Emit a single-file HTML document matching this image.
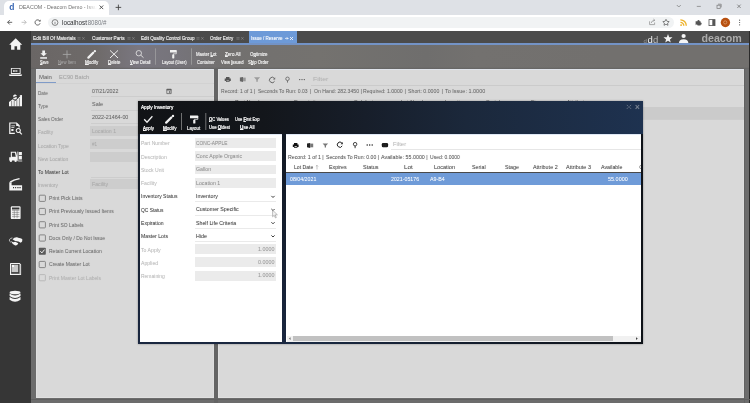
<!DOCTYPE html>
<html><head><meta charset="utf-8">
<style>
*{box-sizing:border-box;margin:0;padding:0}
html,body{width:750px;height:403px;overflow:hidden;background:#fff;font-family:"Liberation Sans",sans-serif}
.a{position:absolute}
.t{position:absolute;white-space:nowrap;line-height:1;text-underline-offset:0.4px;text-decoration-thickness:0.45px;font-family:"Liberation Sans",sans-serif}
#tx{position:absolute;left:0;top:0;width:750px;height:403px;will-change:transform}
svg{position:absolute;overflow:visible;will-change:transform}
</style></head><body>
<!-- chrome tab strip -->
<div class="a" style="left:0;top:0;width:750px;height:15px;background:#dee1e6"></div>
<div class="a" style="left:3.5px;top:1px;width:105px;height:15px;background:#fff;border-radius:5px 5px 0 0"></div>
<div class="a" style="left:0;top:15px;width:750px;height:16px;background:#fff"></div>
<div class="a" style="left:47.5px;top:16.8px;width:626.5px;height:11.4px;background:#f1f3f4;border-radius:6px"></div>
<!-- d logo -->
<svg style="left:0;top:0" width="750" height="31">
 <text x="9.3" y="10.3" font-family="Liberation Sans" font-weight="700" font-size="8.5" fill="#3a68b4">d</text>
 <path d="M99.6 5.5 L103.2 9.1 M103.2 5.5 L99.6 9.1" stroke="#444" stroke-width="0.9"/>
 <path d="M118.4 4.6 V10.2 M115.6 7.4 H121.2" stroke="#444" stroke-width="0.9"/>
 <path d="M676.8 5 L678.8 7 L680.8 5" stroke="#777" stroke-width="0.7" fill="none"/>
 <path d="M696.8 6.4 H700.8" stroke="#777" stroke-width="0.7"/>
 <rect x="717" y="5.2" width="3.2" height="3.2" stroke="#777" stroke-width="0.7" fill="none"/>
 <path d="M718 4.2 H721.2 V7.4" stroke="#777" stroke-width="0.7" fill="none"/>
 <path d="M737.3 4.6 L740.7 8 M740.7 4.6 L737.3 8" stroke="#666" stroke-width="0.7"/>
 <!-- nav -->
 <path d="M12.2 22.3 H7.6 M9.8 20.1 L7.6 22.3 L9.8 24.5" stroke="#555" stroke-width="0.9" fill="none"/>
 <path d="M21.6 22.3 H26.2 M24 20.1 L26.2 22.3 L24 24.5" stroke="#bbb" stroke-width="0.9" fill="none"/>
 <path d="M39.8 21 A2.6 2.6 0 1 0 40.1 23.3" stroke="#555" stroke-width="0.9" fill="none"/>
 <path d="M40.6 19.6 V21.6 H38.6 Z" fill="#555"/>
 <circle cx="55" cy="22.5" r="2.9" stroke="#666" stroke-width="0.8" fill="none"/>
 <path d="M55 21.8 V24" stroke="#666" stroke-width="0.7"/>
 <!-- right icons -->
 <path d="M649.6 21.3 V24.6 H654.6 V22.5 M651.2 23 Q651.8 20.4 654.6 20.2 M653.4 19.1 L654.8 20.2 L653.6 21.4" stroke="#888" stroke-width="0.7" fill="none"/>
 <path d="M666 19.3 L667 21.3 L669.2 21.6 L667.6 23.1 L668 25.3 L666 24.2 L664 25.3 L664.4 23.1 L662.8 21.6 L665 21.3 Z" stroke="#555" stroke-width="0.7" fill="none"/>
 <path d="M680.4 19.9 A5.8 5.8 0 0 1 686.3 25.8 M680.4 22.4 A3.3 3.3 0 0 1 683.8 25.8" stroke="#eeb22a" stroke-width="1.35" fill="none"/>
 <circle cx="681.1" cy="25.1" r="0.95" fill="#eeb22a"/>
 <path d="M695.6 21.2 H697.4 A1.1 1.1 0 0 1 699.6 21.2 H700.6 V22.6 A1.1 1.1 0 0 1 700.6 24.8 V25.6 H697.6 A1 1 0 0 0 695.6 25.6 Z" fill="#555"/>
 <rect x="709" y="19.6" width="6" height="6" stroke="#555" stroke-width="0.8" fill="none"/>
 <rect x="712.3" y="19.6" width="2.7" height="6" fill="#555"/>
 <circle cx="725.4" cy="22.5" r="4.7" fill="#b8500f"/>
 <circle cx="725.2" cy="22.4" r="1.6" stroke="#e8c0a0" stroke-width="0.5" fill="none"/>
 <circle cx="739.6" cy="20.2" r="0.6" fill="#555"/><circle cx="739.6" cy="22.5" r="0.6" fill="#555"/><circle cx="739.6" cy="24.8" r="0.6" fill="#555"/>
</svg>

<!-- APP -->
<div class="a" style="left:0;top:31px;width:31px;height:372px;background:#363636"></div>
<div class="a" style="left:31px;top:31px;width:719px;height:13.3px;background:#4b4b4b"></div>
<div class="a" style="left:248.5px;top:31px;width:48.5px;height:13.3px;background:#6d9ad8"></div>
<div class="a" style="left:31px;top:43px;width:719px;height:2.2px;background:#7393c6"></div>
<div class="a" style="left:31px;top:45.2px;width:719px;height:23.8px;background:linear-gradient(90deg,#6a6665 0%,#6e6a69 9%,#7a7780 15%,#76747b 20%,#72706f 27%,#74726f 40%,#6f6e6d 55%,#73716f 62%,#72706e 80%,#72706e 100%)"></div>
<div class="a" style="left:31px;top:69px;width:719px;height:334px;background:#6c6c6c"></div>
<div class="a" style="left:31px;top:66.5px;width:719px;height:2.5px;background:linear-gradient(180deg,rgba(96,96,96,0),rgba(96,96,96,0.8))"></div>
<div class="a" style="left:213.5px;top:69px;width:4.5px;height:334px;background:#646464"></div>
<div class="a" style="left:744px;top:69px;width:1.2px;height:334px;background:#626262"></div>
<div class="a" style="left:748.8px;top:31px;width:1.2px;height:372px;background:#2a2a2a"></div>
<div class="a" style="left:31px;top:398.5px;width:719px;height:1.2px;background:#606060"></div>
<div class="a" style="left:36px;top:69px;width:177.5px;height:329px;background:#d9d9d9;border-top:1px solid #dfe3ea;border-left:1px solid #e0e0e0;border-bottom:1px solid #e0e0e0;border-right:1px solid #dedede"></div>
<div class="a" style="left:218px;top:69px;width:526px;height:329px;background:#d9d9d9;border-top:1px solid #dfe3ea;border-left:1px solid #e0e0e0;border-bottom:1px solid #e0e0e0;border-right:1px solid #dedede"></div>

<!-- main left tabs underline -->
<div class="a" style="left:36px;top:82px;width:19.6px;height:1.2px;background:#7f9bc8"></div>
<div class="a" style="left:36px;top:83.2px;width:177.5px;height:0.6px;background:#d2d2d2"></div>
<!-- main left fields -->
<div class="a" style="left:90.5px;top:96px;width:123px;height:0.7px;background:#cdcdcd"></div>
<div class="a" style="left:90.5px;top:109.6px;width:123px;height:0.7px;background:#cdcdcd"></div>
<div class="a" style="left:90.5px;top:123px;width:123px;height:0.7px;background:#cdcdcd"></div>
<div class="a" style="left:90.3px;top:126.3px;width:123px;height:9.6px;background:#cdcdcd"></div>
<div class="a" style="left:90.3px;top:139.4px;width:123px;height:9.6px;background:#cdcdcd"></div>
<div class="a" style="left:90.3px;top:152.4px;width:123px;height:9.9px;background:#cdcdcd"></div>
<div class="a" style="left:90.5px;top:176.5px;width:123px;height:0.7px;background:#cdcdcd"></div>
<div class="a" style="left:90.3px;top:179.4px;width:123px;height:9.6px;background:#cdcdcd"></div>
<svg style="left:0;top:0" width="750" height="403">
 <g fill="none" stroke="#777" stroke-width="0.85">
  <rect x="39.2" y="195.2" width="6.2" height="6.2" rx="0.8"/>
  <rect x="39.2" y="208.4" width="6.2" height="6.2" rx="0.8"/>
  <rect x="39.2" y="221.7" width="6.2" height="6.2" rx="0.8"/>
  <rect x="39.2" y="234.9" width="6.2" height="6.2" rx="0.8"/>
  <rect x="39.2" y="261.4" width="6.2" height="6.2" rx="0.8"/>
 </g>
 <rect x="39.2" y="274.6" width="6.2" height="6.2" rx="0.8" fill="none" stroke="#b5b5b5" stroke-width="0.9"/>
 <rect x="38.8" y="247.7" width="7" height="7" rx="0.8" fill="#5a5a5a"/>
 <path d="M40.3 251.2 L41.9 252.9 L44.5 249.6" stroke="#fff" stroke-width="0.9" fill="none"/>
</svg>

<!-- underlying right panel -->
<div class="a" style="left:311px;top:85px;width:433px;height:0.6px;background:#cbcbcb"></div>
<div class="a" style="left:218px;top:107px;width:526px;height:12px;background:#cbcbcb"></div>
<div class="a" style="left:218px;top:119px;width:526px;height:0.8px;background:#cdcdcd"></div>

<span class="t" style="left:235px;top:99.8px;font-size:5.5px;color:#555">Part Number</span>
<span class="t" style="left:294px;top:99.8px;font-size:5.5px;color:#555">Description</span>
<span class="t" style="left:354px;top:99.8px;font-size:5.5px;color:#555">Sub Lot</span>
<span class="t" style="left:401px;top:99.8px;font-size:5.5px;color:#555">Lot Number</span>
<span class="t" style="left:445px;top:99.8px;font-size:5.5px;color:#555">Location</span>
<span class="t" style="left:486px;top:99.8px;font-size:5.5px;color:#555">Serial</span>
<span class="t" style="left:530.6px;top:99.8px;font-size:5.5px;color:#555">Stage</span>
<span class="t" style="left:566.7px;top:99.8px;font-size:5.5px;color:#555">Attribute</span>
<!-- MODAL -->
<div class="a" style="left:137.5px;top:101px;width:505px;height:242.5px;background:linear-gradient(180deg,#121820 0%,#141c2a 40%,#1a2740 100%);box-shadow:0 0 2px rgba(0,0,0,0.35)"></div>
<div class="a" style="left:640.5px;top:134px;width:2px;height:209.5px;background:#0e1218"></div>
<div class="a" style="left:286px;top:341.5px;width:356.5px;height:2px;background:linear-gradient(90deg,#1a2a44,#0e1218)"></div>
<div class="a" style="left:137.5px;top:101px;width:505px;height:32.5px;background:linear-gradient(90deg,#111316 0%,#13161b 25%,#171e2a 45%,#1b283b 65%,#1e3250 100%)"></div>
<div class="a" style="left:139.5px;top:133.5px;width:142px;height:208px;background:#fff;border-top:1px solid #dfe8f5"></div>
<div class="a" style="left:286px;top:133.5px;width:354.5px;height:208px;background:#fff;border-top:1px solid #dfe8f5"></div>
<!-- modal fields -->
<div class="a" style="left:194.5px;top:138px;width:81.5px;height:9.8px;background:#ebebeb"></div>
<div class="a" style="left:194.5px;top:151.3px;width:81.5px;height:10px;background:#ebebeb"></div>
<div class="a" style="left:194.5px;top:164.7px;width:81.5px;height:9.8px;background:#ebebeb"></div>
<div class="a" style="left:194.5px;top:178px;width:81.5px;height:10px;background:#ebebeb"></div>
<div class="a" style="left:194.5px;top:201px;width:81.5px;height:0.8px;background:#eaeaea"></div>
<div class="a" style="left:194.5px;top:214.9px;width:81.5px;height:0.8px;background:#eaeaea"></div>
<div class="a" style="left:194.5px;top:227.9px;width:81.5px;height:0.8px;background:#eaeaea"></div>
<div class="a" style="left:194.5px;top:240.9px;width:81.5px;height:0.8px;background:#eaeaea"></div>
<div class="a" style="left:194.5px;top:244.1px;width:81.5px;height:10.1px;background:#ebebeb"></div>
<div class="a" style="left:194.5px;top:257.3px;width:81.5px;height:10.2px;background:#ebebeb"></div>
<div class="a" style="left:194.5px;top:270.7px;width:81.5px;height:10.3px;background:#ebebeb"></div>
<!-- modal right panel -->
<div class="a" style="left:636px;top:162px;width:4.5px;height:9px;overflow:hidden"><span class="t" style="left:3.2px;top:3.4px;font-size:5.5px;color:#444">C</span></div>

<div class="a" style="left:391px;top:149.3px;width:249.5px;height:0.6px;background:#e6e6e6"></div>
<div class="a" style="left:286px;top:172px;width:354.5px;height:1px;background:#4a4a4a"></div>
<div class="a" style="left:286px;top:173.2px;width:354.5px;height:11.5px;background:#6f9bd8"></div>
<div class="a" style="left:287px;top:335.5px;width:353.5px;height:6px;background:#f1f1f1"></div>
<div class="a" style="left:293px;top:336px;width:320px;height:5px;background:#c1c1c1"></div>
<svg style="left:0;top:0" width="750" height="403">
 <path d="M290.6 337.3 L288.8 338.6 L290.6 339.9 Z" fill="#777"/>
 <path d="M636 337.3 L637.8 338.6 L636 339.9 Z" fill="#444"/>
 <!-- chevrons -->
 <g stroke="#333" stroke-width="0.95" fill="none">
  <path d="M271.4 195.9 L273 197.5 L274.6 195.9"/>
  <path d="M271.4 209 L273 210.6 L274.6 209"/>
  <path d="M271.4 222.2 L273 223.8 L274.6 222.2"/>
  <path d="M271.4 235.4 L273 237 L274.6 235.4"/>
 </g>
 <!-- cursor -->
 <path d="M272.6 210.2 L272.6 216.8 L274.2 215.3 L275.4 217.9 L276.3 217.5 L275.2 214.9 L277.4 214.8 Z" fill="#f4f4f4" stroke="#8a8a8a" stroke-width="0.55"/>
 <!-- sort arrow -->
 <path d="M317 169.5 V165.3 M315.9 166.4 L317 165.3 L318.1 166.4" stroke="#888" stroke-width="0.5" fill="none"/>
</svg>

<!-- ICONS -->
<svg style="left:0;top:0" width="750" height="403">
 <path d="M166.8 89.2 H171.2 V93.6 H166.8 Z" stroke="#555" stroke-width="0.7" fill="none"/>
 <rect x="166.8" y="89.2" width="4.4" height="1.2" fill="#555"/>
 <rect x="168.9" y="91.3" width="1.4" height="1.4" fill="#555"/>
</svg>
<svg style="left:0;top:0" width="750" height="403">
 <!-- sidebar -->
 <g fill="#f4f4f4">
  <path d="M15.7 38.3 L22.2 44.7 H20.3 V49.8 H17.1 V46.2 H14.5 V49.8 H11.1 V44.7 H9.2 Z"/>
  <path d="M10.9 67.9 H20.6 V74 H10.9 Z M11.8 68.8 V73.1 H19.7 V68.8 Z M8.8 74.4 H22.2 L21.5 76.1 H9.5 Z"/>
  <path d="M15.5 70 L18.2 71 L15.5 72 Z M13 70.2 H14.8 V71.8 H13 Z" />
  <path d="M9 106.3 V102 L12.8 99.2 L15.3 101 L20.2 96.2 L19.6 95.3 L22 95.1 V106.3 Z"/><path d="M11.6 101 V106.5 M14.2 100.5 V106.5 M16.8 100 V106.5 M19.4 98 V106.5" stroke="#363636" stroke-width="0.55"/>
  <path d="M14.5 94.3 h1 v0.8 h1.1 v1 h-2 v0.6 h1.7 q0.4 0 0.4 0.5 v1.2 q0 0.5 -0.4 0.5 h-0.8 v0.8 h-1 v-0.8 h-1.1 v-1 h2 v-0.6 h-1.7 q-0.4 0 -0.4 -0.5 v-1.2 q0 -0.5 0.4 -0.5 h0.8 Z"/>
  <path d="M9.2 122.4 H16.8 L19.7 125.3 V127.6 A3.4 3.4 0 0 0 18.5 127.6 V125.9 H16.2 V123.6 H10.4 V132.8 H15 L14.7 134 H9.2 Z"/>
  <path d="M11.3 125.5 H15 V126.3 H11.3 Z M11.3 127.3 H14.3 V128.1 H11.3 Z M11.3 129.1 H13.5 V131 H11.3 Z"/>
  <path d="M18.3 127.9 A2.6 2.6 0 1 1 18.29 127.9 Z M18.3 129 A1.5 1.5 0 1 0 18.31 129 Z" fill-rule="evenodd"/>
  <path d="M19.9 131.6 L22.3 134 L21.4 134.8 L19.1 132.5 Z"/>
  <path d="M10.8 151.8 H16 L17.3 156.8 V160.6 H9.2 V157.3 H10.8 Z M11.9 152.8 V156.8 H15.8 L14.9 152.8 Z" fill-rule="evenodd"/>
  <circle cx="10.9" cy="160.8" r="1.2"/><circle cx="15.6" cy="160.8" r="1.2"/>
  <rect x="17.4" y="151.6" width="0.9" height="9.6"/>
  <path d="M18.3 160.6 H22.2 V161.4 H18.3 Z"/>
  <path d="M18.8 152 H21.9 V155.3 H18.8 Z M18.8 156 H21.9 V159.6 H18.8 Z"/>
  <path d="M9.6 181.4 Q13 179.3 19.3 177.9 L19.8 179.2 Q14.5 180.2 11 182.5 Z"/>
  <path d="M9.3 182.2 H11.6 V185.3 H22.1 V190.5 H9.3 Z M13 187.1 H14.1 V188.2 H13 Z M15.1 187.1 H16.2 V188.2 H15.1 Z M17.3 187.1 H18.6 V188.2 H17.3 Z M19.4 187.1 H20.7 V188.2 H19.4 Z" fill-rule="evenodd"/>
  <rect x="10.8" y="206.3" width="9.8" height="12.8" rx="1.2"/><rect x="12" y="207.5" width="7.4" height="2" fill="#363636"/><path d="M12 210.6 H19.4 M12 212.6 H19.4 M12 214.6 H19.4 M12 216.6 H19.4 M14.3 210.3 V218.2 M17.1 210.3 V218.2" stroke="#5a5a5a" stroke-width="0.45"/>
  <path d="M12.6 239.3 Q14.2 237 17 237.2 L19 238 Q21.8 237.9 22.4 239.6 Q22.6 241.8 20.8 242.8 L18.4 241.4 L15.4 241.1 Q13.8 240.6 12.6 239.3 Z"/>
  <path d="M10.8 241 L13.2 242.2 L15.3 241.7 L18.3 243.2 Q17.4 245.6 15.2 245.4 Q12.6 244.8 10.8 241 Z"/>
  <path d="M12.4 237.9 Q10 238 9.3 240 Q9.4 241.6 10.8 242.3" stroke="#d8d8d8" stroke-width="0.8" fill="none"/>
  <path d="M10.9 262.9 H19.6 L21.1 264.4 V274.9 H10 V263.8 Q10 262.9 10.9 262.9 Z M11.1 264 V273.8 H20 V264.9 L19.2 264 Z" fill-rule="evenodd"/>
  <rect x="19.4" y="264.6" width="1.3" height="9.8" fill="#bdbdbd"/>
  <rect x="11.6" y="264.7" width="6.6" height="7.6" fill="#c8c8c8"/>
  <rect x="12.1" y="265.1" width="1.8" height="1.8" fill="#fff"/>
  <path d="M11.6 272.6 H18.4" stroke="#3a3a3a" stroke-width="0.6"/>
  <ellipse cx="15.05" cy="292.5" rx="5.45" ry="1.8"/>
  <path d="M9.6 293.6 Q15 297.4 20.5 293.6 V296 Q15 299.8 9.6 296 Z"/>
  <path d="M9.6 297 Q15 300.8 20.5 297 V299.7 Q15 304 9.6 299.7 Z"/>
 </g>
 <!-- main toolbar -->
 <g fill="#f2f2f2">
  <path d="M42.3 50.4 H45 V53.2 H46.9 L43.65 56.3 L40.4 53.2 H42.3 Z"/>
  <rect x="40.2" y="57.2" width="6.8" height="1.5"/>
 </g>
 <path d="M67 50.4 V58.4 M62.8 54.4 H71.2" stroke="#a5a5a5" stroke-width="0.9"/>
 <path d="M88.4 57.6 L93.2 52.8" stroke="#f0f0f0" stroke-width="2.3" stroke-linecap="round"/><circle cx="94.9" cy="51.2" r="1.15" fill="#f0f0f0"/>
 <path d="M110 50.4 L118 58 M118 50.4 L110 58" stroke="#f2f2f2" stroke-width="1"/>
 <circle cx="138.8" cy="53.2" r="2.7" stroke="#dcdcdc" stroke-width="0.9" fill="none"/>
 <path d="M140.7 55.1 L143.5 57.7" stroke="#dcdcdc" stroke-width="1"/>
 <path d="M155.5 48.3 V64.7 M191.5 48.3 V64.7" stroke="#a5a5a5" stroke-width="0.7"/>
 <g fill="#f2f2f2">
  <path d="M170 50 H176 Q176.8 50 176.8 50.8 V52.6 H170 Z"/><path d="M176.3 52.4 V53.8 H173.3 V55" stroke="#f2f2f2" stroke-width="0.7" fill="none"/><rect x="172.2" y="54.4" width="2.1" height="4" rx="0.6"/>
 </g>
 <!-- tab icons -->
 <g stroke="#9a9a9a" stroke-width="0.5">
  <path d="M77.4 37.7 H80.6 M77.4 39.1 H80.6 M82.2 37.1 L84.6 39.7 M84.6 37.1 L82.2 39.7"/>
  <path d="M127.4 37.7 H130.6 M127.4 39.1 H130.6 M132.2 37.1 L134.6 39.7 M134.6 37.1 L132.2 39.7"/>
  <path d="M196.4 37.7 H199.6 M196.4 39.1 H199.6 M201.2 37.1 L203.6 39.7 M203.6 37.1 L201.2 39.7"/>
  <path d="M236.4 37.7 H239.6 M236.4 39.1 H239.6 M241.2 37.1 L243.6 39.7 M243.6 37.1 L241.2 39.7"/>
 </g>
 <path d="M285 38.45 L286.6 37.3 V39.6 Z M288.8 38.45 L287.2 37.3 V39.6 Z" fill="#fff"/>
 <path d="M290 37 L293 40 M293 37 L290 40" stroke="#fff" stroke-width="0.8"/>
 <!-- header right -->
 <text x="643.6" y="42.6" font-family="Liberation Sans" font-size="6" fill="#9a9a9a">d</text>
 <text x="647.6" y="42.6" font-family="Liberation Sans" font-size="9.5" fill="#f2f2f2">d</text>
 <text x="653" y="42.6" font-family="Liberation Sans" font-size="9.5" fill="#b9b9b9">d</text>
 <path d="M668 34 L669.2 37.2 L672.5 37.3 L669.9 39.4 L670.8 42.6 L668 40.8 L665.2 42.6 L666.1 39.4 L663.5 37.3 L666.8 37.2 Z" fill="#f4f4f4"/>
 <circle cx="683.6" cy="36" r="2.1" fill="#f4f4f4"/>
 <path d="M678.9 43 Q679 39.4 683.6 39.2 Q688.2 39.4 688.4 43 Z" fill="#f4f4f4"/>
 <text x="701.5" y="41.6" font-family="Liberation Sans" font-weight="700" font-size="11.5" fill="#ababab" textLength="40.3" lengthAdjust="spacingAndGlyphs">deacom</text>
 <!-- underlying right panel toolbar -->
 <g fill="#555">
  <path d="M226 76.9 H229.5 V78.4 H230.8 V81 H229.5 V82 H226 V81 H224.7 V78.4 H226 Z M226.6 80.4 V81.3 H228.9 V80.4 Z" fill-rule="evenodd"/>
 </g>
 <path d="M239.9 77.6 L243 76.9 V82 L239.9 81.3 Z" fill="#666"/>
 <rect x="243" y="77.6" width="2.7" height="3.7" fill="#999"/>
 <path d="M254 77.3 H260.1 L257.8 79.8 V81.7 L256.3 81.7 V79.8 Z" fill="#9c9c9c"/>
 <path d="M274.3 78.3 A2.7 2.7 0 1 0 274.6 81.2" stroke="#666" stroke-width="1" fill="none"/>
 <path d="M275.2 77.3 V79.5 H273 Z" fill="#666"/>
 <circle cx="287.5" cy="78.8" r="1.75" stroke="#666" stroke-width="0.85" fill="none"/><path d="M287.5 80.6 V82.6" stroke="#666" stroke-width="0.9"/>
 <g fill="#555"><circle cx="299.7" cy="79.6" r="0.7"/><circle cx="302" cy="79.6" r="0.7"/><circle cx="304.3" cy="79.6" r="0.7"/></g>
 <!-- modal toolbar -->
 <path d="M144.2 119.3 L147 122.2 L152.4 116.3" stroke="#f2f2f2" stroke-width="1.3" fill="none"/>
 <path d="M166.2 122.6 L171.3 117.5" stroke="#f2f2f2" stroke-width="2.3" stroke-linecap="round"/><circle cx="173" cy="115.9" r="1.2" fill="#f2f2f2"/>
 <path d="M181.5 113 V130 M205.8 113 V130" stroke="#9a9a9a" stroke-width="0.7"/>
 <g fill="#f2f2f2"><path d="M190 115.5 H197.5 Q198.3 115.5 198.3 116.3 V118.2 H190 Z"/><path d="M197.8 118 V119.4 H194.4 V120.5" stroke="#f2f2f2" stroke-width="0.7" fill="none"/><rect x="193.2" y="119.8" width="2.2" height="3.8" rx="0.6"/></g>
 <!-- modal window controls -->
 <g stroke="#76808f" stroke-width="0.8" fill="none">
  <path d="M626.8 104.9 L628.4 106.5 M631.1 104.9 L629.5 106.5 M626.8 108.9 L628.4 107.3 M631.1 108.9 L629.5 107.3"/>
  <path d="M635.6 105 L639.1 108.8 M639.1 105 L635.6 108.8" stroke-width="1.1"/>
 </g>
 <!-- modal right toolbar -->
 <path d="M294 143.1 H297.4 V144.5 H298.6 V147 H297.4 V147.8 H294 V147 H292.8 V144.5 H294 Z M294.6 146.3 V147.1 H296.8 V146.3 Z" fill="#111" fill-rule="evenodd"/>
 <path d="M307 143.6 L310.2 142.9 V148 L307 147.3 Z" fill="#222"/>
 <rect x="310.2" y="143.6" width="3" height="3.7" fill="#777"/>
 <path d="M322.6 143.5 H328.1 L326 145.8 V147.5 L324.7 147.5 V145.8 Z" fill="#777"/>
 <path d="M341.9 143 A2.6 2.6 0 1 0 342.2 145.9" stroke="#222" stroke-width="1" fill="none"/>
 <path d="M342.8 142 V144.2 H340.6 Z" fill="#222"/>
 <circle cx="355.1" cy="144.2" r="1.75" stroke="#222" stroke-width="0.85" fill="none"/><path d="M355.1 146 V148.2" stroke="#222" stroke-width="0.9"/>
 <g fill="#222"><circle cx="367.2" cy="145" r="0.75"/><circle cx="369.7" cy="145" r="0.75"/><circle cx="372.2" cy="145" r="0.75"/></g>
 <rect x="381.8" y="142.9" width="6.3" height="4.3" rx="1.3" fill="#151515"/><path d="M383.9 142.9 V147.2 M385.9 142.9 V147.2" stroke="#555" stroke-width="0.35"/>
</svg>
<div id="tx"><span class="t" style="left:18.65px;top:4.70px;font-size:5.8px;color:#707070;font-weight:400;transform:scaleX(0.9152);transform-origin:0 0;text-shadow:0 0 0.9px rgba(112,112,112,0.25);text-shadow:none;-webkit-mask-image:linear-gradient(90deg,#000 85%,transparent 100%)">DEACOM - Deacom Demo - Issu</span>
<span class="t" style="left:61.61px;top:19.58px;font-size:6.5px;color:#303134;font-weight:400;transform:scaleX(0.9728);transform-origin:0 0;text-shadow:0 0 0.9px rgba(48,49,52,0.25);text-shadow:none">localhost</span>
<span class="t" style="left:86.21px;top:19.58px;font-size:6.5px;color:#7a7d82;font-weight:400;transform:scaleX(0.9422);transform-origin:0 0;text-shadow:0 0 0.9px rgba(122,125,130,0.25);text-shadow:none">:8080/#</span>
<span class="t" style="left:32.67px;top:35.91px;font-size:5.5px;color:#f2f2f2;font-weight:400;transform:scaleX(0.8597);transform-origin:0 0;text-shadow:0 0 0.9px rgba(242,242,242,0.25);-webkit-text-stroke:0.12px #f2f2f2">Edit Bill Of Materials</span>
<span class="t" style="left:91.67px;top:35.91px;font-size:5.5px;color:#f2f2f2;font-weight:400;transform:scaleX(0.8520);transform-origin:0 0;text-shadow:0 0 0.9px rgba(242,242,242,0.25);-webkit-text-stroke:0.12px #f2f2f2">Customer Parts</span>
<span class="t" style="left:140.67px;top:35.91px;font-size:5.5px;color:#f2f2f2;font-weight:400;transform:scaleX(0.8341);transform-origin:0 0;text-shadow:0 0 0.9px rgba(242,242,242,0.25);-webkit-text-stroke:0.12px #f2f2f2">Edit Quality Control Group</span>
<span class="t" style="left:210.47px;top:35.91px;font-size:5.5px;color:#f2f2f2;font-weight:400;transform:scaleX(0.8208);transform-origin:0 0;text-shadow:0 0 0.9px rgba(242,242,242,0.25);-webkit-text-stroke:0.12px #f2f2f2">Order Entry</span>
<span class="t" style="left:250.87px;top:35.91px;font-size:5.5px;color:#ffffff;font-weight:400;transform:scaleX(0.8227);transform-origin:0 0;text-shadow:0 0 0.9px rgba(255,255,255,0.25);-webkit-text-stroke:0.08px #fff">Issue / Reserve</span>
<span class="t" style="left:39.72px;top:61.11px;font-size:4.7px;color:#f0f0f0;font-weight:400;transform:scaleX(0.7890);transform-origin:0 0;text-shadow:0 0 0.9px rgba(240,240,240,0.25);-webkit-text-stroke:0.12px #f0f0f0"><u>S</u>ave</span>
<span class="t" style="left:57.72px;top:61.11px;font-size:4.7px;color:#a8a8a8;font-weight:400;transform:scaleX(0.9040);transform-origin:0 0;text-shadow:0 0 0.9px rgba(168,168,168,0.25);"><u>N</u>ew Item</span>
<span class="t" style="left:84.72px;top:61.11px;font-size:4.7px;color:#f0f0f0;font-weight:400;transform:scaleX(0.9661);transform-origin:0 0;text-shadow:0 0 0.9px rgba(240,240,240,0.25);-webkit-text-stroke:0.12px #f0f0f0"><u>M</u>odify</span>
<span class="t" style="left:107.72px;top:61.11px;font-size:4.7px;color:#f0f0f0;font-weight:400;transform:scaleX(0.9232);transform-origin:0 0;text-shadow:0 0 0.9px rgba(240,240,240,0.25);-webkit-text-stroke:0.12px #f0f0f0"><u>D</u>elete</span>
<span class="t" style="left:129.52px;top:61.11px;font-size:4.7px;color:#f0f0f0;font-weight:400;transform:scaleX(0.8768);transform-origin:0 0;text-shadow:0 0 0.9px rgba(240,240,240,0.25);-webkit-text-stroke:0.12px #f0f0f0"><u>V</u>iew Detail</span>
<span class="t" style="left:161.72px;top:60.91px;font-size:4.7px;color:#f0f0f0;font-weight:400;transform:scaleX(0.8620);transform-origin:0 0;text-shadow:0 0 0.9px rgba(240,240,240,0.25);-webkit-text-stroke:0.12px #f0f0f0">Layout (User)</span>
<span class="t" style="left:195.72px;top:52.61px;font-size:4.7px;color:#f0f0f0;font-weight:400;transform:scaleX(0.9256);transform-origin:0 0;text-shadow:0 0 0.9px rgba(240,240,240,0.25);-webkit-text-stroke:0.12px #f0f0f0">Master <u>L</u>ot</span>
<span class="t" style="left:196.72px;top:60.91px;font-size:4.7px;color:#f0f0f0;font-weight:400;transform:scaleX(0.8601);transform-origin:0 0;text-shadow:0 0 0.9px rgba(240,240,240,0.25);-webkit-text-stroke:0.12px #f0f0f0">Container</span>
<span class="t" style="left:224.72px;top:52.61px;font-size:4.7px;color:#f0f0f0;font-weight:400;transform:scaleX(0.9777);transform-origin:0 0;text-shadow:0 0 0.9px rgba(240,240,240,0.25);-webkit-text-stroke:0.12px #f0f0f0"><u>Z</u>ero All</span>
<span class="t" style="left:220.72px;top:60.91px;font-size:4.7px;color:#f0f0f0;font-weight:400;transform:scaleX(0.8923);transform-origin:0 0;text-shadow:0 0 0.9px rgba(240,240,240,0.25);-webkit-text-stroke:0.12px #f0f0f0">View <u>I</u>ssued</span>
<span class="t" style="left:249.72px;top:52.61px;font-size:4.7px;color:#f0f0f0;font-weight:400;transform:scaleX(0.9470);transform-origin:0 0;text-shadow:0 0 0.9px rgba(240,240,240,0.25);-webkit-text-stroke:0.12px #f0f0f0">O<u>p</u>timize</span>
<span class="t" style="left:247.72px;top:60.91px;font-size:4.7px;color:#f0f0f0;font-weight:400;transform:scaleX(0.9040);transform-origin:0 0;text-shadow:0 0 0.9px rgba(240,240,240,0.25);-webkit-text-stroke:0.12px #f0f0f0">S<u>h</u>ip Order</span>
<span class="t" style="left:39.43px;top:73.91px;font-size:6.2px;color:#666;font-weight:400;transform:scaleX(0.9623);transform-origin:0 0;text-shadow:0 0 0.9px rgba(102,102,102,0.25);">Main</span>
<span class="t" style="left:58.83px;top:73.91px;font-size:6.2px;color:#a3a3a3;font-weight:400;transform:scaleX(0.9168);transform-origin:0 0;text-shadow:0 0 0.9px rgba(163,163,163,0.25);">EC90 Batch</span>
<span class="t" style="left:37.76px;top:90.50px;font-size:5.6px;color:#6c6c6c;font-weight:400;transform:scaleX(0.8336);transform-origin:0 0;text-shadow:0 0 0.9px rgba(108,108,108,0.25);">Date</span>
<span class="t" style="left:37.76px;top:103.50px;font-size:5.6px;color:#6c6c6c;font-weight:400;transform:scaleX(0.8283);transform-origin:0 0;text-shadow:0 0 0.9px rgba(108,108,108,0.25);">Type</span>
<span class="t" style="left:37.76px;top:116.90px;font-size:5.6px;color:#6c6c6c;font-weight:400;transform:scaleX(0.8428);transform-origin:0 0;text-shadow:0 0 0.9px rgba(108,108,108,0.25);">Sales Order</span>
<span class="t" style="left:37.76px;top:130.20px;font-size:5.6px;color:#a9a9a9;font-weight:400;transform:scaleX(0.8665);transform-origin:0 0;text-shadow:0 0 0.9px rgba(169,169,169,0.25);">Facility</span>
<span class="t" style="left:37.76px;top:143.60px;font-size:5.6px;color:#a9a9a9;font-weight:400;transform:scaleX(0.8837);transform-origin:0 0;text-shadow:0 0 0.9px rgba(169,169,169,0.25);">Location Type</span>
<span class="t" style="left:37.76px;top:156.90px;font-size:5.6px;color:#a9a9a9;font-weight:400;transform:scaleX(0.8967);transform-origin:0 0;text-shadow:0 0 0.9px rgba(169,169,169,0.25);">New Location</span>
<span class="t" style="left:37.76px;top:170.20px;font-size:5.6px;color:#444;font-weight:400;transform:scaleX(0.9061);transform-origin:0 0;text-shadow:0 0 0.9px rgba(68,68,68,0.25);">To Master Lot</span>
<span class="t" style="left:37.76px;top:183.40px;font-size:5.6px;color:#a9a9a9;font-weight:400;transform:scaleX(0.8638);transform-origin:0 0;text-shadow:0 0 0.9px rgba(169,169,169,0.25);">Inventory</span>
<span class="t" style="left:91.95px;top:88.80px;font-size:5.8px;color:#666;font-weight:400;transform:scaleX(0.9110);transform-origin:0 0;text-shadow:0 0 0.9px rgba(102,102,102,0.25);">07/21/2022</span>
<span class="t" style="left:91.95px;top:102.20px;font-size:5.8px;color:#666;font-weight:400;transform:scaleX(0.9438);transform-origin:0 0;text-shadow:0 0 0.9px rgba(102,102,102,0.25);">Sale</span>
<span class="t" style="left:91.95px;top:115.20px;font-size:5.8px;color:#666;font-weight:400;transform:scaleX(0.9241);transform-origin:0 0;text-shadow:0 0 0.9px rgba(102,102,102,0.25);">2022-21464-00</span>
<span class="t" style="left:92.15px;top:128.50px;font-size:5.8px;color:#a9a9a9;font-weight:400;transform:scaleX(0.9014);transform-origin:0 0;text-shadow:0 0 0.9px rgba(169,169,169,0.25);">Location 1</span>
<span class="t" style="left:92.15px;top:141.70px;font-size:5.8px;color:#a9a9a9;font-weight:400;transform:scaleX(0.7816);transform-origin:0 0;text-shadow:0 0 0.9px rgba(169,169,169,0.25);">#1</span>
<span class="t" style="left:92.15px;top:182.00px;font-size:5.8px;color:#a9a9a9;font-weight:400;transform:scaleX(0.8933);transform-origin:0 0;text-shadow:0 0 0.9px rgba(169,169,169,0.25);">Facility</span>
<span class="t" style="left:48.56px;top:195.90px;font-size:5.6px;color:#6c6c6c;font-weight:400;transform:scaleX(0.9135);transform-origin:0 0;text-shadow:0 0 0.9px rgba(108,108,108,0.25);">Print Pick Lists</span>
<span class="t" style="left:48.56px;top:209.10px;font-size:5.6px;color:#6c6c6c;font-weight:400;transform:scaleX(0.8971);transform-origin:0 0;text-shadow:0 0 0.9px rgba(108,108,108,0.25);">Print Previously Issued Items</span>
<span class="t" style="left:48.56px;top:222.50px;font-size:5.6px;color:#6c6c6c;font-weight:400;transform:scaleX(0.8802);transform-origin:0 0;text-shadow:0 0 0.9px rgba(108,108,108,0.25);">Print SO Labels</span>
<span class="t" style="left:48.56px;top:235.80px;font-size:5.6px;color:#6c6c6c;font-weight:400;transform:scaleX(0.8934);transform-origin:0 0;text-shadow:0 0 0.9px rgba(108,108,108,0.25);">Docs Only / Do Not Issue</span>
<span class="t" style="left:48.56px;top:248.90px;font-size:5.6px;color:#6c6c6c;font-weight:400;transform:scaleX(0.8918);transform-origin:0 0;text-shadow:0 0 0.9px rgba(108,108,108,0.25);">Retain Current Location</span>
<span class="t" style="left:48.56px;top:262.30px;font-size:5.6px;color:#6c6c6c;font-weight:400;transform:scaleX(0.9091);transform-origin:0 0;text-shadow:0 0 0.9px rgba(108,108,108,0.25);">Create Master Lot</span>
<span class="t" style="left:48.56px;top:275.50px;font-size:5.6px;color:#b0b0b0;font-weight:400;transform:scaleX(0.9040);transform-origin:0 0;text-shadow:0 0 0.9px rgba(176,176,176,0.25);">Print Master Lot Labels</span>
<span class="t" style="left:313.15px;top:77.30px;font-size:5.8px;color:#b3b3b3;font-weight:400;transform:scaleX(1.1890);transform-origin:0 0;text-shadow:0 0 0.9px rgba(179,179,179,0.25);">Filter</span>
<span class="t" style="left:220.67px;top:88.91px;font-size:5.5px;color:#6a6a6a;font-weight:400;transform:scaleX(0.9148);transform-origin:0 0;text-shadow:0 0 0.9px rgba(106,106,106,0.25);">Record: 1 of 1</span>
<span class="t" style="left:253.87px;top:88.91px;font-size:5.5px;color:#6a6a6a;font-weight:400;transform:scaleX(1.0000);transform-origin:0 0;text-shadow:0 0 0.9px rgba(106,106,106,0.25);">|</span>
<span class="t" style="left:258.47px;top:88.91px;font-size:5.5px;color:#6a6a6a;font-weight:400;transform:scaleX(0.9181);transform-origin:0 0;text-shadow:0 0 0.9px rgba(106,106,106,0.25);">Seconds To Run: 0.03</span>
<span class="t" style="left:310.07px;top:88.91px;font-size:5.5px;color:#6a6a6a;font-weight:400;transform:scaleX(1.0000);transform-origin:0 0;text-shadow:0 0 0.9px rgba(106,106,106,0.25);">|</span>
<span class="t" style="left:313.57px;top:88.91px;font-size:5.5px;color:#6a6a6a;font-weight:400;transform:scaleX(0.9376);transform-origin:0 0;text-shadow:0 0 0.9px rgba(106,106,106,0.25);">On Hand: 282.3450</span>
<span class="t" style="left:360.47px;top:88.91px;font-size:5.5px;color:#6a6a6a;font-weight:400;transform:scaleX(1.0000);transform-origin:0 0;text-shadow:0 0 0.9px rgba(106,106,106,0.25);">|</span>
<span class="t" style="left:363.47px;top:88.91px;font-size:5.5px;color:#6a6a6a;font-weight:400;transform:scaleX(0.9412);transform-origin:0 0;text-shadow:0 0 0.9px rgba(106,106,106,0.25);">Required: 1.0000</span>
<span class="t" style="left:404.47px;top:88.91px;font-size:5.5px;color:#6a6a6a;font-weight:400;transform:scaleX(1.0000);transform-origin:0 0;text-shadow:0 0 0.9px rgba(106,106,106,0.25);">|</span>
<span class="t" style="left:408.37px;top:88.91px;font-size:5.5px;color:#6a6a6a;font-weight:400;transform:scaleX(0.9484);transform-origin:0 0;text-shadow:0 0 0.9px rgba(106,106,106,0.25);">Short: 0.0000</span>
<span class="t" style="left:441.47px;top:88.91px;font-size:5.5px;color:#6a6a6a;font-weight:400;transform:scaleX(1.0000);transform-origin:0 0;text-shadow:0 0 0.9px rgba(106,106,106,0.25);">|</span>
<span class="t" style="left:445.07px;top:88.91px;font-size:5.5px;color:#6a6a6a;font-weight:400;transform:scaleX(0.9971);transform-origin:0 0;text-shadow:0 0 0.9px rgba(106,106,106,0.25);">To Issue: 1.0000</span>
<span class="t" style="left:140.67px;top:104.71px;font-size:5.5px;color:#ffffff;font-weight:400;transform:scaleX(0.8507);transform-origin:0 0;text-shadow:0 0 0.9px rgba(255,255,255,0.25);-webkit-text-stroke:0.2px #fff">Apply Inventory</span>
<span class="t" style="left:142.81px;top:126.61px;font-size:4.8px;color:#f4f4f4;font-weight:400;transform:scaleX(0.9004);transform-origin:0 0;text-shadow:0 0 0.9px rgba(244,244,244,0.25);-webkit-text-stroke:0.18px #f4f4f4"><u>A</u>pply</span>
<span class="t" style="left:162.91px;top:126.61px;font-size:4.8px;color:#f4f4f4;font-weight:400;transform:scaleX(0.9510);transform-origin:0 0;text-shadow:0 0 0.9px rgba(244,244,244,0.25);-webkit-text-stroke:0.18px #f4f4f4"><u>M</u>odify</span>
<span class="t" style="left:187.21px;top:126.61px;font-size:4.8px;color:#f4f4f4;font-weight:400;transform:scaleX(0.9110);transform-origin:0 0;text-shadow:0 0 0.9px rgba(244,244,244,0.25);-webkit-text-stroke:0.18px #f4f4f4">Layout</span>
<span class="t" style="left:209.41px;top:117.61px;font-size:4.8px;color:#f4f4f4;font-weight:400;transform:scaleX(0.8667);transform-origin:0 0;text-shadow:0 0 0.9px rgba(244,244,244,0.25);-webkit-text-stroke:0.18px #f4f4f4"><u>Q</u>C Values</span>
<span class="t" style="left:234.71px;top:117.61px;font-size:4.8px;color:#f4f4f4;font-weight:400;transform:scaleX(0.8500);transform-origin:0 0;text-shadow:0 0 0.9px rgba(244,244,244,0.25);-webkit-text-stroke:0.18px #f4f4f4">Use <u>F</u>irst Exp</span>
<span class="t" style="left:209.21px;top:126.31px;font-size:4.8px;color:#f4f4f4;font-weight:400;transform:scaleX(0.8846);transform-origin:0 0;text-shadow:0 0 0.9px rgba(244,244,244,0.25);-webkit-text-stroke:0.18px #f4f4f4">Use <u>O</u>ldest</span>
<span class="t" style="left:239.71px;top:126.31px;font-size:4.8px;color:#f4f4f4;font-weight:400;transform:scaleX(0.9748);transform-origin:0 0;text-shadow:0 0 0.9px rgba(244,244,244,0.25);-webkit-text-stroke:0.18px #f4f4f4"><u>U</u>se All</span>
<span class="t" style="left:140.86px;top:141.30px;font-size:5.6px;color:#b8b8b8;font-weight:400;transform:scaleX(0.9019);transform-origin:0 0;text-shadow:0 0 0.9px rgba(184,184,184,0.25);">Part Number</span>
<span class="t" style="left:140.86px;top:154.70px;font-size:5.6px;color:#b8b8b8;font-weight:400;transform:scaleX(0.9227);transform-origin:0 0;text-shadow:0 0 0.9px rgba(184,184,184,0.25);">Description</span>
<span class="t" style="left:140.96px;top:168.00px;font-size:5.6px;color:#b8b8b8;font-weight:400;transform:scaleX(0.9022);transform-origin:0 0;text-shadow:0 0 0.9px rgba(184,184,184,0.25);">Stock Unit</span>
<span class="t" style="left:140.96px;top:181.20px;font-size:5.6px;color:#b8b8b8;font-weight:400;transform:scaleX(0.9023);transform-origin:0 0;text-shadow:0 0 0.9px rgba(184,184,184,0.25);">Facility</span>
<span class="t" style="left:140.96px;top:194.30px;font-size:5.6px;color:#3c3c3c;font-weight:400;transform:scaleX(0.9006);transform-origin:0 0;text-shadow:0 0 0.9px rgba(60,60,60,0.25);">Inventory Status</span>
<span class="t" style="left:140.86px;top:208.00px;font-size:5.6px;color:#3c3c3c;font-weight:400;transform:scaleX(0.8711);transform-origin:0 0;text-shadow:0 0 0.9px rgba(60,60,60,0.25);">QC Status</span>
<span class="t" style="left:140.86px;top:221.10px;font-size:5.6px;color:#3c3c3c;font-weight:400;transform:scaleX(0.9048);transform-origin:0 0;text-shadow:0 0 0.9px rgba(60,60,60,0.25);">Expiration</span>
<span class="t" style="left:140.86px;top:234.20px;font-size:5.6px;color:#3c3c3c;font-weight:400;transform:scaleX(0.9243);transform-origin:0 0;text-shadow:0 0 0.9px rgba(60,60,60,0.25);">Master Lots</span>
<span class="t" style="left:141.06px;top:247.60px;font-size:5.6px;color:#b8b8b8;font-weight:400;transform:scaleX(0.9227);transform-origin:0 0;text-shadow:0 0 0.9px rgba(184,184,184,0.25);">To Apply</span>
<span class="t" style="left:141.06px;top:261.00px;font-size:5.6px;color:#b8b8b8;font-weight:400;transform:scaleX(0.9167);transform-origin:0 0;text-shadow:0 0 0.9px rgba(184,184,184,0.25);">Applied</span>
<span class="t" style="left:141.06px;top:274.00px;font-size:5.6px;color:#b8b8b8;font-weight:400;transform:scaleX(0.8896);transform-origin:0 0;text-shadow:0 0 0.9px rgba(184,184,184,0.25);">Remaining</span>
<span class="t" style="left:196.06px;top:140.70px;font-size:5.6px;color:#8e8e8e;font-weight:400;transform:scaleX(0.8627);transform-origin:0 0;text-shadow:0 0 0.9px rgba(142,142,142,0.25);">CONC-APPLE</span>
<span class="t" style="left:196.06px;top:154.00px;font-size:5.6px;color:#8e8e8e;font-weight:400;transform:scaleX(0.9268);transform-origin:0 0;text-shadow:0 0 0.9px rgba(142,142,142,0.25);">Conc Apple Organic</span>
<span class="t" style="left:196.06px;top:167.20px;font-size:5.6px;color:#8e8e8e;font-weight:400;transform:scaleX(0.9355);transform-origin:0 0;text-shadow:0 0 0.9px rgba(142,142,142,0.25);">Gallon</span>
<span class="t" style="left:196.06px;top:180.70px;font-size:5.6px;color:#8e8e8e;font-weight:400;transform:scaleX(0.9381);transform-origin:0 0;text-shadow:0 0 0.9px rgba(142,142,142,0.25);">Location 1</span>
<span class="t" style="left:195.76px;top:194.20px;font-size:5.6px;color:#3c3c3c;font-weight:400;transform:scaleX(0.9488);transform-origin:0 0;text-shadow:0 0 0.9px rgba(60,60,60,0.25);">Inventory</span>
<span class="t" style="left:195.76px;top:207.30px;font-size:5.6px;color:#3c3c3c;font-weight:400;transform:scaleX(0.9414);transform-origin:0 0;text-shadow:0 0 0.9px rgba(60,60,60,0.25);">Customer Specific</span>
<span class="t" style="left:195.76px;top:220.50px;font-size:5.6px;color:#3c3c3c;font-weight:400;transform:scaleX(0.9376);transform-origin:0 0;text-shadow:0 0 0.9px rgba(60,60,60,0.25);">Shelf Life Criteria</span>
<span class="t" style="left:195.76px;top:233.70px;font-size:5.6px;color:#3c3c3c;font-weight:400;transform:scaleX(0.9406);transform-origin:0 0;text-shadow:0 0 0.9px rgba(60,60,60,0.25);">Hide</span>
<span class="t" style="left:258.46px;top:246.60px;font-size:5.6px;color:#9a9a9a;font-weight:400;transform:scaleX(0.9612);transform-origin:0 0;text-shadow:0 0 0.9px rgba(154,154,154,0.25);">1.0000</span>
<span class="t" style="left:258.46px;top:259.80px;font-size:5.6px;color:#9a9a9a;font-weight:400;transform:scaleX(0.9612);transform-origin:0 0;text-shadow:0 0 0.9px rgba(154,154,154,0.25);">0.0000</span>
<span class="t" style="left:258.46px;top:273.40px;font-size:5.6px;color:#9a9a9a;font-weight:400;transform:scaleX(0.9612);transform-origin:0 0;text-shadow:0 0 0.9px rgba(154,154,154,0.25);">1.0000</span>
<span class="t" style="left:393.25px;top:142.30px;font-size:5.8px;color:#b8b8b8;font-weight:400;transform:scaleX(1.0168);transform-origin:0 0;text-shadow:0 0 0.9px rgba(184,184,184,0.25);">Filter</span>
<span class="t" style="left:288.07px;top:154.71px;font-size:5.5px;color:#555;font-weight:400;transform:scaleX(0.9561);transform-origin:0 0;text-shadow:0 0 0.9px rgba(85,85,85,0.25);">Record: 1 of 1</span>
<span class="t" style="left:322.27px;top:154.71px;font-size:5.5px;color:#555;font-weight:400;transform:scaleX(1.0000);transform-origin:0 0;text-shadow:0 0 0.9px rgba(85,85,85,0.25);">|</span>
<span class="t" style="left:325.97px;top:154.71px;font-size:5.5px;color:#555;font-weight:400;transform:scaleX(0.9312);transform-origin:0 0;text-shadow:0 0 0.9px rgba(85,85,85,0.25);">Seconds To Run: 0.00</span>
<span class="t" style="left:377.47px;top:154.71px;font-size:5.5px;color:#555;font-weight:400;transform:scaleX(1.0000);transform-origin:0 0;text-shadow:0 0 0.9px rgba(85,85,85,0.25);">|</span>
<span class="t" style="left:381.17px;top:154.71px;font-size:5.5px;color:#555;font-weight:400;transform:scaleX(0.9705);transform-origin:0 0;text-shadow:0 0 0.9px rgba(85,85,85,0.25);">Available: 55.0000</span>
<span class="t" style="left:426.17px;top:154.71px;font-size:5.5px;color:#555;font-weight:400;transform:scaleX(1.0000);transform-origin:0 0;text-shadow:0 0 0.9px rgba(85,85,85,0.25);">|</span>
<span class="t" style="left:429.67px;top:154.71px;font-size:5.5px;color:#555;font-weight:400;transform:scaleX(0.9139);transform-origin:0 0;text-shadow:0 0 0.9px rgba(85,85,85,0.25);">Used: 0.0000</span>
<span class="t" style="left:294.47px;top:164.71px;font-size:5.5px;color:#444;font-weight:400;transform:scaleX(0.9286);transform-origin:0 0;text-shadow:0 0 0.9px rgba(68,68,68,0.25);">Lot Date</span>
<span class="t" style="left:328.57px;top:164.71px;font-size:5.5px;color:#444;font-weight:400;transform:scaleX(0.9670);transform-origin:0 0;text-shadow:0 0 0.9px rgba(68,68,68,0.25);">Expires</span>
<span class="t" style="left:363.27px;top:164.71px;font-size:5.5px;color:#444;font-weight:400;transform:scaleX(0.9977);transform-origin:0 0;text-shadow:0 0 0.9px rgba(68,68,68,0.25);">Status</span>
<span class="t" style="left:403.67px;top:164.71px;font-size:5.5px;color:#444;font-weight:400;transform:scaleX(1.1435);transform-origin:0 0;text-shadow:0 0 0.9px rgba(68,68,68,0.25);">Lot</span>
<span class="t" style="left:434.37px;top:164.71px;font-size:5.5px;color:#444;font-weight:400;transform:scaleX(1.0081);transform-origin:0 0;text-shadow:0 0 0.9px rgba(68,68,68,0.25);">Location</span>
<span class="t" style="left:471.67px;top:164.71px;font-size:5.5px;color:#444;font-weight:400;transform:scaleX(0.9700);transform-origin:0 0;text-shadow:0 0 0.9px rgba(68,68,68,0.25);">Serial</span>
<span class="t" style="left:504.67px;top:164.71px;font-size:5.5px;color:#444;font-weight:400;transform:scaleX(0.9770);transform-origin:0 0;text-shadow:0 0 0.9px rgba(68,68,68,0.25);">Stage</span>
<span class="t" style="left:532.67px;top:164.71px;font-size:5.5px;color:#444;font-weight:400;transform:scaleX(0.9829);transform-origin:0 0;text-shadow:0 0 0.9px rgba(68,68,68,0.25);">Attribute 2</span>
<span class="t" style="left:566.07px;top:164.71px;font-size:5.5px;color:#444;font-weight:400;transform:scaleX(0.9952);transform-origin:0 0;text-shadow:0 0 0.9px rgba(68,68,68,0.25);">Attribute 3</span>
<span class="t" style="left:601.17px;top:164.71px;font-size:5.5px;color:#444;font-weight:400;transform:scaleX(0.9641);transform-origin:0 0;text-shadow:0 0 0.9px rgba(68,68,68,0.25);">Available</span>
<span class="t" style="left:290.47px;top:176.81px;font-size:5.5px;color:#ffffff;font-weight:400;transform:scaleX(0.9564);transform-origin:0 0;text-shadow:0 0 0.9px rgba(255,255,255,0.25);">08/04/2021</span>
<span class="t" style="left:390.67px;top:176.81px;font-size:5.5px;color:#ffffff;font-weight:400;transform:scaleX(0.9577);transform-origin:0 0;text-shadow:0 0 0.9px rgba(255,255,255,0.25);">2021-05176</span>
<span class="t" style="left:430.47px;top:176.81px;font-size:5.5px;color:#ffffff;font-weight:400;transform:scaleX(0.9702);transform-origin:0 0;text-shadow:0 0 0.9px rgba(255,255,255,0.25);">A9-B4</span>
<span class="t" style="left:607.57px;top:176.81px;font-size:5.5px;color:#ffffff;font-weight:400;transform:scaleX(0.9932);transform-origin:0 0;text-shadow:0 0 0.9px rgba(255,255,255,0.25);">55.0000</span></div>
</body></html>
